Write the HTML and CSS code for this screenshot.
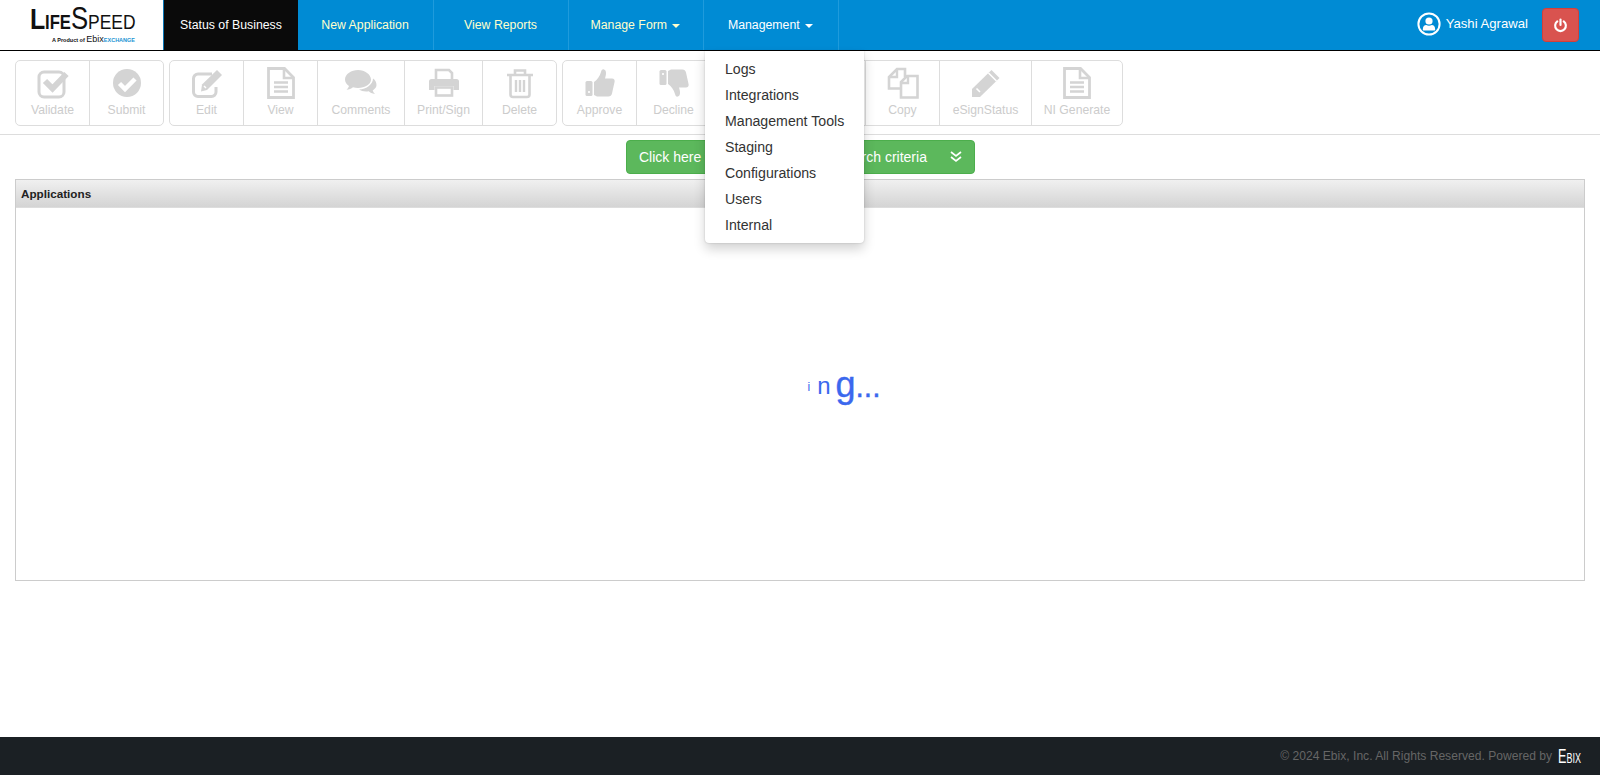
FILE: index.html
```html
<!DOCTYPE html>
<html lang="en">
<head>
  <meta charset="UTF-8">
  <title>LifeSpeed</title>
  <link rel="stylesheet" href="styles.css">
</head>
<body>

  <nav class="navbar">
    <div class="brand">
      <div class="brand-name"><span class="cap-l">L</span><span class="bold-part">IFE</span><span class="cap-s">S</span><span class="thin-part">PEED</span></div>
      <div class="brand-sub">A Product of <span class="brand-ebix">Ebix</span><span class="brand-ex">EXCHANGE</span></div>
    </div>
    <ul class="nav-links">
      <li class="nav-item active">Status of Business</li>
      <li class="nav-item nav-wide">New Application</li>
      <li class="nav-item">View Reports</li>
      <li class="nav-item">Manage Form <span class="caret"></span></li>
      <li class="nav-item open">Management <span class="caret"></span>
        <ul class="dropdown">
          <li>Logs</li>
          <li>Integrations</li>
          <li>Management Tools</li>
          <li>Staging</li>
          <li>Configurations</li>
          <li>Users</li>
          <li>Internal</li>
        </ul>
      </li>
    </ul>
    <div class="user-area">
      <svg class="user-icon" viewBox="0 0 24 24">
        <circle cx="12" cy="12" r="10.6" fill="none" stroke="#fff" stroke-width="2"/>
        <circle cx="12" cy="9" r="3.6" fill="#fff"/>
        <path d="M5.8 17.6c0-3.2 1.6-4.6 3.4-4.6 1.6 1 4 1 5.6 0 1.8 0 3.4 1.4 3.4 4.6 0 .6-.5 1-1 1H6.800c-.5 0-1-.4-1-1z" fill="#fff"/>
      </svg>
      <span class="user-name">Yashi Agrawal</span>
      <button class="power-btn">
        <svg viewBox="0 0 14 14" width="15" height="15">
          <path d="M4 3.200a5 5 0 1 0 6 0" fill="none" stroke="#fff" stroke-width="2" stroke-linecap="round"/>
          <path d="M7 1.500v5" fill="none" stroke="#fff" stroke-width="2" stroke-linecap="round"/>
        </svg>
      </button>
    </div>
  </nav>

  <div class="toolbar">
    <div class="btn-group">
      <div class="tool tool-74">
        <svg viewBox="0 0 32 32"><rect x="2" y="5" width="25" height="25" rx="5" fill="none" stroke="#d4d4d4" stroke-width="3"/><path d="M8 14l7.500 7.500L29.500 7" fill="none" stroke="#d4d4d4" stroke-width="6"/></svg>
        <span>Validate</span>
      </div>
      <div class="tool tool-73">
        <svg viewBox="0 0 32 32"><circle cx="16" cy="16" r="14" fill="#d4d4d4"/><path d="M8.500 16.500l5.500 5.500 10-10" fill="none" stroke="#fff" stroke-width="4.500"/></svg>
        <span>Submit</span>
      </div>
    </div>
    <div class="btn-group">
      <div class="tool tool-74">
        <svg viewBox="0 0 32 32"><path d="M25 20v5a4.500 4.500 0 0 1-4.500 4.500H7A4.500 4.500 0 0 1 2.500 25V11.500A4.500 4.500 0 0 1 7 7h14" fill="none" stroke="#d4d4d4" stroke-width="3"/><path d="M11 17.500L26 3l5 5-15 15-6 1.500z" fill="#d4d4d4"/><path d="M13 19l2 2" stroke="#fff" stroke-width="1.500"/></svg>
        <span>Edit</span>
      </div>
      <div class="tool tool-74">
        <svg viewBox="0 0 32 32"><use href="#file-text"/></svg>
        <span>View</span>
      </div>
      <div class="tool tool-87">
        <svg viewBox="0 0 32 32"><path d="M13 3C6.500 3 0 7 0 12.500c0 2.800 1.800 5 4 6.500-.4 1.400-1.300 2.700-2.500 3.800 2.500-.3 4.800-1.200 6.500-2.500 1.600.4 3.300.6 5 .6 7 0 13-3.500 13-8.400S20 3 13 3z" fill="#d4d4d4"/><path d="M28 11.500c.2 5.500-6.500 10.800-14 11 1.800 1.300 4.300 2 7 2 .9 0 1.900-.1 2.800-.3 1.400 1.300 3.200 2.300 6.200 2.800-1-1-1.800-2.300-2.300-3.600 2.200-1.300 3.800-3.100 3.800-5.400 0-2.500-1-5-3.500-6.500z" fill="#d4d4d4"/></svg>
        <span>Comments</span>
      </div>
      <div class="tool tool-78">
        <svg viewBox="0 0 32 32"><path d="M8 13V3h13l3 3v7" fill="none" stroke="#d4d4d4" stroke-width="2.600"/><path d="M3.500 12h25A2.500 2.500 0 0 1 31 14.500V23h-5.500v-4h-19v4H1v-8.500A2.500 2.500 0 0 1 3.500 12z" fill="#d4d4d4"/><rect x="8" y="20.500" width="16" height="8" fill="none" stroke="#d4d4d4" stroke-width="2.600"/></svg>
        <span>Print/Sign</span>
      </div>
      <div class="tool tool-73">
        <svg viewBox="0 0 32 32"><path d="M3 8h26M11 7V3.500h10V7" fill="none" stroke="#d4d4d4" stroke-width="2.600"/><path d="M6.500 8v19.500a2.500 2.500 0 0 0 2.500 2.500h14a2.500 2.500 0 0 0 2.500-2.500V8" fill="none" stroke="#d4d4d4" stroke-width="2.600"/><path d="M12 13v12M16 13v12M20 13v12" stroke="#d4d4d4" stroke-width="2.400"/></svg>
        <span>Delete</span>
      </div>
    </div>
    <div class="btn-group">
      <div class="tool tool-74">
        <svg viewBox="0 0 32 32"><rect x="1.500" y="14" width="7" height="15" rx="1.500" fill="#d4d4d4"/><circle cx="5" cy="25" r="1.100" fill="#fff"/><path d="M10 15c3-2 6-6 7-10 .4-2 1.500-3 3-2.500 2.500.8 2.500 4.500 1 9h7c2 0 3 1.500 2.600 3.300L28 26.500c-.4 1.800-1.800 3-3.600 3H14c-1.500 0-2.500-.7-4-1.500z" fill="#d4d4d4"/></svg>
        <span>Approve</span>
      </div>
      <div class="tool tool-74">
        <svg viewBox="0 0 32 32"><rect x="1.500" y="3" width="7" height="15" rx="1.500" fill="#d4d4d4"/><circle cx="5" cy="7" r="1.100" fill="#fff"/><path d="M10 17c3 2 6 6 7 10 .4 2 1.500 3 3 2.500 2.500-.8 2.500-4.500 1-9h7c2 0 3-1.500 2.600-3.300L28 5.500c-.4-1.800-1.800-3-3.600-3H14c-1.500 0-2.500.7-4 1.500z" fill="#d4d4d4"/></svg>
        <span>Decline</span>
      </div>
      <div class="tool tool-hidden"></div>
      <div class="tool tool-74">
        <svg viewBox="0 0 32 32"><path d="M13 21.500H2V10l8-8h8v8" fill="none" stroke="#d4d4d4" stroke-width="2.600"/><path d="M10 3v7H3" fill="none" stroke="#d4d4d4" stroke-width="2.400"/><path d="M14 30.500V15l6-6h10.500v21.500z" fill="#fff" stroke="#d4d4d4" stroke-width="2.600"/><path d="M21 9v7h-6.500" fill="none" stroke="#d4d4d4" stroke-width="2.400"/></svg>
        <span>Copy</span>
      </div>
      <div class="tool tool-92">
        <svg viewBox="0 0 32 32"><path d="M2 22L21.500 3l8 8L10 30H2z" fill="#d4d4d4"/><path d="M6.500 21.500l3.500 3.500M18.500 6l8 8" stroke="#fff" stroke-width="1.600"/></svg>
        <span>eSignStatus</span>
      </div>
      <div class="tool tool-90">
        <svg viewBox="0 0 32 32"><use href="#file-text"/></svg>
        <span>NI Generate</span>
      </div>
    </div>
  </div>

  <svg class="defs" width="0" height="0">
    <symbol id="file-text" viewBox="0 0 32 32">
      <path d="M3.500 1.500h16l9 9V30.500h-25z" fill="none" stroke="#d4d4d4" stroke-width="2.800"/>
      <path d="M19 2v9h9" fill="none" stroke="#d4d4d4" stroke-width="2.600"/>
      <path d="M9 15.500h14M9 20h14M9 24.500h14" stroke="#d4d4d4" stroke-width="2.600"/>
    </symbol>
  </svg>

  <main class="content">
    <div class="search-row">
      <button class="search-btn">
        <span>Click here to expand &amp; collapse search criteria</span>
        <svg viewBox="0 0 14 14" width="14" height="14">
          <path d="M2 2l5 4 5-4M2 7l5 4 5-4" fill="none" stroke="#fff" stroke-width="1.700"/>
        </svg>
      </button>
    </div>
    <section class="panel">
      <div class="panel-head">Applications</div>
      <div class="panel-body">
        <div class="loader"><span class="l-i">i</span><span class="l-n">n</span><span class="l-g">g</span><span class="l-dots">...</span></div>
      </div>
    </section>
  </main>

  <footer class="footer">
    <span>© 2024 Ebix, Inc. All Rights Reserved. Powered by</span>
    <span class="footer-logo">Ebix</span>
  </footer>

</body>
</html>
```

FILE: styles.css
```css
* {
  box-sizing: border-box;
}

html, body {
  height: 100%;
}

body {
  margin: 0;
  font-family: "Liberation Sans", Arial, sans-serif;
  background: #fff;
  color: #333;
  display: flex;
  flex-direction: column;
  overflow: hidden;
}

ul {
  list-style: none;
  margin: 0;
  padding: 0;
}

.navbar {
  display: flex;
  height: 51px;
  flex-shrink: 0;
  background: #008bd4;
  border-bottom: 1px solid #000;
}

.brand {
  width: 164px;
  background: #fff;
  border-right: 1px solid #0a76b5;
  padding-top: 1px;
  text-align: center;
  color: #111;
}

.brand-name {
  height: 34px;
  line-height: 36px;
  padding-left: 3px;
  white-space: nowrap;
  transform: scaleX(0.83);
}

.cap-l {
  font-size: 30px;
  font-weight: bold;
}

.bold-part {
  font-size: 20px;
  font-weight: bold;
}

.cap-s {
  font-size: 31px;
}

.thin-part {
  font-size: 21px;
}

.brand-sub {
  font-size: 5.500px;
  font-weight: bold;
  line-height: 8px;
  padding-left: 24px;
  white-space: nowrap;
}

.brand-ebix {
  font-size: 9px;
  font-weight: normal;
}

.brand-ex {
  color: #1b93d3;
}

.nav-links {
  display: flex;
}

.nav-item {
  position: relative;
  width: 135px;
  height: 50px;
  padding-right: 1px;
  line-height: 50px;
  text-align: center;
  font-size: 12.300px;
  color: #ffffcc;
  border-right: 1px solid #1f9bdc;
}

.nav-item.active {
  width: 134px;
  padding-right: 0;
  background: #0a0a0a;
  color: #fff;
  border-right: none;
}

.nav-item.nav-wide {
  width: 136px;
}

.nav-item.open {
  color: #fff;
}

.caret {
  display: inline-block;
  margin-left: 2px;
  vertical-align: middle;
  border-top: 4px solid;
  border-left: 4px solid transparent;
  border-right: 4px solid transparent;
}

.dropdown {
  position: absolute;
  top: 51px;
  left: 1px;
  z-index: 10;
  width: 159px;
  height: 192px;
  padding: 5px 0;
  background: #fff;
  border-radius: 0 0 4px 4px;
  box-shadow: 0 6px 12px rgba(0, 0, 0, 0.18), 0 0 2px rgba(0, 0, 0, 0.2);
  line-height: 26px;
  text-align: left;
  color: #333;
  font-size: 14.150px;
}

.dropdown li {
  height: 26px;
  padding-left: 20px;
  white-space: nowrap;
}

.user-area {
  margin-left: auto;
  display: flex;
  align-items: center;
  padding-right: 21px;
  color: #fff;
}

.user-icon {
  width: 24px;
  height: 24px;
  margin-bottom: 2px;
}

.user-name {
  margin-left: 5px;
  margin-bottom: 3px;
  font-size: 13.150px;
}

.power-btn {
  width: 37px;
  height: 34px;
  margin-left: 14px;
  padding: 0;
  background: #d9534f;
  border: 1px solid #d43f3a;
  border-radius: 4px;
  display: flex;
  align-items: center;
  justify-content: center;
}

.toolbar {
  display: flex;
  gap: 5px;
  height: 84px;
  flex-shrink: 0;
  padding: 9px 15px 0;
  border-bottom: 1px solid #ddd;
}

.btn-group {
  display: flex;
  height: 66px;
  border: 1px solid #ddd;
  border-radius: 5px;
}

.tool {
  display: flex;
  flex-direction: column;
  align-items: center;
  padding-top: 6px;
  border-right: 1px solid #ddd;
  font-size: 12.200px;
  color: #ccc;
}

.tool:last-child {
  border-right: none;
}

.tool svg {
  width: 32px;
  height: 32px;
  margin-bottom: 4px;
}

.tool-73 {
  width: 73px;
}

.tool-74 {
  width: 74px;
}

.tool-78 {
  width: 78px;
}

.tool-87 {
  width: 87px;
}

.tool-90 {
  width: 90px;
}

.tool-92 {
  width: 92px;
}

.tool-hidden {
  width: 155px;
}

.defs {
  position: absolute;
}

.content {
  flex: 1;
  padding: 5px 15px 0;
}

.search-row {
  display: flex;
  justify-content: center;
  margin-left: 1px;
}

.search-btn {
  display: flex;
  align-items: center;
  justify-content: space-between;
  width: 349px;
  height: 34px;
  padding: 0 11px 0 12px;
  background: #5cb85c;
  border: 1px solid #4cae4c;
  border-radius: 4px;
  font-family: inherit;
  font-size: 14px;
  color: #fff;
}

.panel {
  height: 402px;
  margin-top: 5px;
  display: flex;
  flex-direction: column;
  border: 1px solid #ccc;
}

.panel-head {
  height: 28px;
  line-height: 27px;
  padding-left: 5px;
  font-size: 11.700px;
  font-weight: bold;
  color: #222;
  background: linear-gradient(#f0f0f0, #d4d4d4);
  border-bottom: 1px solid #ddd;
}

.panel-body {
  flex: 1;
  display: flex;
  justify-content: center;
  padding-top: 156px;
}

.loader {
  height: 50px;
  margin-left: 88px;
  color: #3b68ee;
  white-space: nowrap;
}

.l-i {
  font-size: 12px;
  margin-right: 7px;
  vertical-align: 6px;
}

.l-n {
  font-size: 24px;
  margin-right: 5px;
  vertical-align: 3px;
}

.l-g {
  font-size: 36px;
  -webkit-text-stroke: 0.4px #3b68ee;
}

.l-dots {
  font-size: 30px;
  -webkit-text-stroke: 0.4px #3b68ee;
}

.footer {
  flex-shrink: 0;
  height: 38px;
  display: flex;
  align-items: center;
  justify-content: flex-end;
  gap: 6px;
  padding-right: 20px;
  background: #1b2024;
  color: #666;
  font-size: 12.100px;
}

.footer-logo {
  width: 22px;
  color: #fff;
  font-size: 21px;
  font-variant: small-caps;
  white-space: nowrap;
  transform: scaleX(0.6);
  transform-origin: left center;
}
```
